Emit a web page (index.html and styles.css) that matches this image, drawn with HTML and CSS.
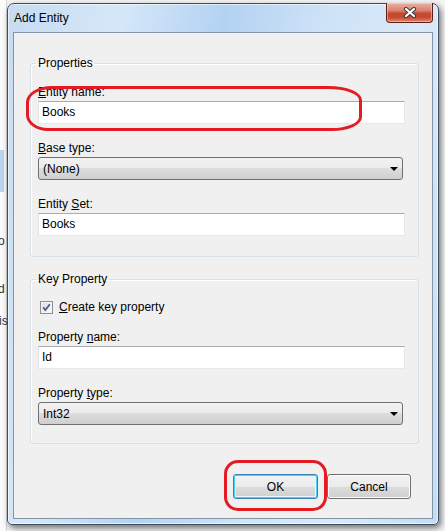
FILE: index.html
```html
<!DOCTYPE html>
<html lang="en">
<head>
    <meta charset="UTF-8">
    <title>Add Entity</title>
    <link rel="stylesheet" href="styles.css">
</head>
<body>
<div class="desk">
    <div class="behind">
        <span class="frag frag1">o</span>
        <span class="frag frag2">d</span>
        <span class="frag frag3">is</span>
    </div>

    <div class="window">
        <div class="titlebar">
            <span class="title">Add Entity</span>
            <div class="close">
                <svg width="14" height="11" viewBox="0 0 14 11">
                    <path d="M3 2 L11 9 M11 2 L3 9" stroke="#3a3a3a" stroke-width="4.2" stroke-linecap="round"/>
                    <path d="M3 2 L11 9 M11 2 L3 9" stroke="#ffffff" stroke-width="2.2" stroke-linecap="round"/>
                </svg>
            </div>
        </div>

        <div class="client">
            <fieldset class="group props">
                <legend>Properties</legend>
                <label class="lbl"><u>E</u>ntity name:</label>
                <div class="textbox">Books</div>
                <label class="lbl"><u>B</u>ase type:</label>
                <div class="combo"><span>(None)</span><i class="arrow"></i></div>
                <label class="lbl">Entity <u>S</u>et:</label>
                <div class="textbox last">Books</div>
            </fieldset>

            <fieldset class="group keyprop">
                <legend>Key Property</legend>
                <div class="check">
                    <span class="box">
                        <svg width="11" height="11" viewBox="0 0 11 11">
                            <path d="M2.2 5.4 L4.4 8 L8.8 2.2" fill="none" stroke="#4a5f8f" stroke-width="1.8"/>
                        </svg>
                    </span>
                    <span><u>C</u>reate key property</span>
                </div>
                <label class="lbl">Property <u>n</u>ame:</label>
                <div class="textbox">Id</div>
                <label class="lbl">Property <u>t</u>ype:</label>
                <div class="combo last"><span>Int32</span><i class="arrow"></i></div>
            </fieldset>

            <div class="buttons">
                <button class="btn ok">OK</button>
                <button class="btn cancel">Cancel</button>
            </div>
        </div>
    </div>

    <!-- red marks drawn over the screenshot -->
    <div class="mark mark-name"></div>
    <div class="mark mark-ok"></div>
</div>
</body>
</html>
```

FILE: styles.css
```css
*{
    box-sizing: border-box;
}
body{
    margin:0;
    background:#f7f7f7;
    font-family:"Liberation Sans", "Noto Sans", sans-serif;
    font-size:12px;
    color:#000;
}
.desk{
    position: relative;
    width:445px;
    height:531px;
    overflow: hidden;
    padding-top:3px;
    background:#f4f4f4;
}
.behind{
    position: absolute;
    left:0;
    top:0;
    width:7px;
    height:531px;
    background:#fbfbfb;
    border-right:1px solid #d8d8d8;
}
.behind:before{
    content:"";
    position: absolute;
    left:0;
    top:150px;
    width:4px;
    height:42px;
    background:#b9d4ee;
}
.frag{
    position: absolute;
    left:-2px;
    font-size:12px;
    color:#333;
}
.frag1{ top:234px; }
.frag2{ top:282px; }
.frag3{ top:314px; left:-1px; }

.window{
    position: relative;
    margin-left:7px;
    width:432px;
    height:522px;
    border:1px solid #3d4d60;
    border-radius:7px 7px 5px 5px;
    background: linear-gradient(100deg, #c6dcf2 0%, #d6e7f8 22%, #b3d2f2 42%, #cfe3f7 62%, #d9e9f9 80%, #c6dcf3 100%);
    padding:0 5px 5px 5px;
    display: flex;
    flex-direction: column;
    box-shadow: 2px 3px 6px rgba(0,0,0,0.55), inset 0 0 0 1px rgba(255,255,255,0.6);
}
.titlebar{
    height:28px;
    display: flex;
    justify-content: space-between;
    align-items: flex-start;
}
.title{
    padding:6px 0 0 1px;
    line-height:16px;
    font-size:12px;
}
.close{
    width:47px;
    height:20px;
    margin-top:-1px;
    border:1px solid #5d1d14;
    border-top:none;
    border-radius:0 0 4px 4px;
    background: linear-gradient(#eab1a4 0%, #d9826f 40%, #c8472f 55%, #c54a32 75%, #dc8a72 100%);
    box-shadow: inset 0 0 0 1px rgba(255,220,210,0.5);
    display: flex;
    align-items: center;
    justify-content: center;
}
.client{
    flex:1;
    border:1px solid #8294a8;
    background:#f0f0f0;
    display: flex;
    flex-direction: column;
}
.group{
    margin:0 13px 0 16px;
    padding:13px 13px 20px 7px;
    border:1px solid #d5dfe5;
    border-radius:3px;
    min-width:0;
    box-shadow: inset 1px 1px 0 #fff;
}
.group legend{
    padding:0 2px;
    margin-left:-2px;
    line-height:16px;
}
.props{
    margin-top:22px;
}
.keyprop{
    margin-top:14px;
    padding-top:12px;
    padding-bottom:18px;
}
.lbl{
    display: block;
    line-height:16px;
    margin-bottom:1px;
}
.textbox{
    height:23px;
    border:1px solid;
    border-color:#abadb3 #e3e9ef #e3e9ef #e2e3ea;
    background:#fff;
    padding-left:3px;
    line-height:21px;
    margin-bottom:16px;
}
.combo{
    height:23px;
    margin-right:2px;
    border:1px solid #707070;
    border-radius:3px;
    background: linear-gradient(#f2f2f2 0%, #ebebeb 50%, #dddddd 50%, #cfcfcf 100%);
    padding:0 4px 0 4px;
    display: flex;
    align-items: center;
    justify-content: space-between;
    margin-bottom:16px;
}
.last{
    margin-bottom:0;
}
.arrow{
    width:0;
    height:0;
    border-left:4px solid transparent;
    border-right:4px solid transparent;
    border-top:4px solid #000;
    margin-top:1px;
}
.check{
    display: flex;
    align-items: center;
    gap:6px;
    height:16px;
    margin:0 0 14px 2px;
}
.check .box{
    width:13px;
    height:13px;
    border:1px solid #8e8f8f;
    background: linear-gradient(135deg, #dcdcdc, #fcfcfc);
    box-shadow: inset 0 0 0 1px #f4f4f4;
    display: flex;
    align-items: center;
    justify-content: center;
}
.buttons{
    display: flex;
    justify-content: flex-end;
    gap:9px;
    margin:30px 21px 0 0;
}
.btn{
    height:25px;
    border:1px solid #707070;
    border-radius:3px;
    background: linear-gradient(#f2f2f2 0%, #ebebeb 50%, #dddddd 50%, #cfcfcf 100%);
    box-shadow: inset 0 0 0 1px #fcfcfc;
    font-family: inherit;
    font-size:12px;
    color:#000;
    padding:0;
}
.ok{
    width:85px;
    border-color:#3c7fb1;
    box-shadow: inset 0 0 0 1px #48d2f8, inset 0 0 0 2px #e8f6fd;
}
.cancel{
    width:84px;
}
.mark{
    position: absolute;
    border:3px solid #e41b23;
}
.mark-name{
    left:26px;
    top:86px;
    width:336px;
    height:45px;
    border-radius:26px 34px 30px 22px / 16px 14px 14px 16px;
}
.mark-ok{
    left:224px;
    top:460px;
    width:103px;
    height:51px;
    border-radius:14px;
}
```
